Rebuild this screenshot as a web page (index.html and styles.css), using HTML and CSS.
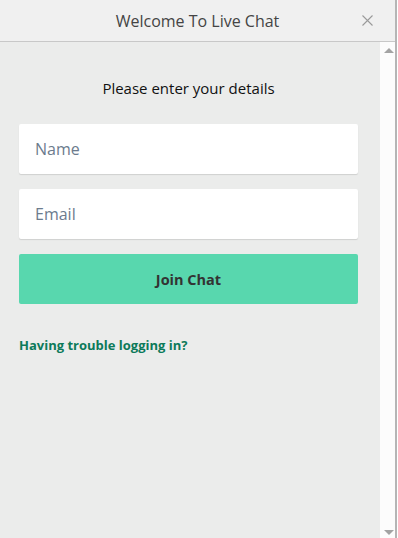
FILE: index.html
```html
<!DOCTYPE html>
<html lang="en">
<head>
<meta charset="utf-8">
<title>Welcome To Live Chat</title>
<link rel="stylesheet" href="styles.css">
</head>
<body>
<div class="window">
  <header class="header">
    <h1 class="title">Welcome To Live Chat</h1>
    <button class="close" aria-label="Close">
      <svg width="11" height="11" viewBox="0 0 11 11"><path d="M0.5 0.5L10.5 10.5M10.5 0.5L0.5 10.5" stroke="#9a9a9a" stroke-width="1.1" fill="none"/></svg>
    </button>
  </header>
  <div class="main">
    <div class="content">
      <p class="intro">Please enter your details</p>
      <form class="form">
        <input class="field" type="text" placeholder="Name">
        <input class="field" type="email" placeholder="Email">
        <button class="join" type="button">Join Chat</button>
      </form>
      <a class="trouble" href="#">Having trouble logging in?</a>
    </div>
    <div class="scrollbar">
      <span class="arrow up"></span>
      <span class="arrow down"></span>
    </div>
  </div>
</div>
</body>
</html>
```
FILE: styles.css
```css
html, body {
  margin: 0;
  padding: 0;
  background: #ffffff;
}
body {
  width: 398px;
  height: 538px;
  overflow: hidden;
  font-family: "Open Sans", "Noto Sans", sans-serif;
}
.window {
  width: 395px;
  height: 538px;
  border-right: 2px solid #b5b5b5;
  display: flex;
  flex-direction: column;
}
.header {
  height: 41px;
  flex: none;
  background: #f0f0f0;
  border-bottom: 1px solid #c8c8c8;
  display: flex;
  align-items: center;
  justify-content: center;
  position: relative;
}
.title {
  margin: 0;
  font-size: 16px;
  font-weight: 400;
  color: #444444;
}
.close {
  position: absolute;
  right: 22px;
  top: 15px;
  width: 11px;
  height: 11px;
  padding: 0;
  border: 0;
  background: none;
  display: flex;
}
.main {
  flex: 1;
  display: flex;
  min-height: 0;
}
.content {
  width: 380px;
  box-sizing: border-box;
  background: #ebeceb;
  padding: 0 22px 0 19px;
}
.intro {
  margin: 35px 0 0;
  height: 22px;
  line-height: 22px;
  text-align: center;
  font-size: 15px;
  color: #111111;
}
.form {
  margin-top: 25px;
  display: flex;
  flex-direction: column;
  gap: 15px;
}
.field {
  height: 50px;
  box-sizing: border-box;
  border: 0;
  border-radius: 2px;
  background: #ffffff;
  box-shadow: 0 1px 1px rgba(0, 0, 0, 0.12);
  padding: 0 16px;
  font-family: inherit;
  font-size: 16px;
  color: #333333;
  outline: none;
}
.field::placeholder {
  color: #6c7b8d;
  opacity: 1;
}
.join {
  height: 50px;
  border: 0;
  border-radius: 2px;
  background: #58d7ae;
  font-family: inherit;
  font-size: 14.5px;
  font-weight: 700;
  color: #333333;
  cursor: pointer;
}
.trouble {
  display: block;
  margin-top: 32px;
  font-size: 13px;
  font-weight: 700;
  color: #0c7a5a;
  text-decoration: none;
}
.scrollbar {
  width: 15px;
  background: #fcfcfc;
  display: flex;
  flex-direction: column;
  justify-content: space-between;
  align-items: center;
  padding: 6px 0 3px;
  box-sizing: border-box;
}
.arrow {
  width: 0;
  height: 0;
  border-left: 5px solid transparent;
  border-right: 5px solid transparent;
  margin-left: 3px;
}
.arrow.up {
  border-bottom: 5px solid #a3a3a3;
}
.arrow.down {
  border-top: 5px solid #a3a3a3;
}
```
